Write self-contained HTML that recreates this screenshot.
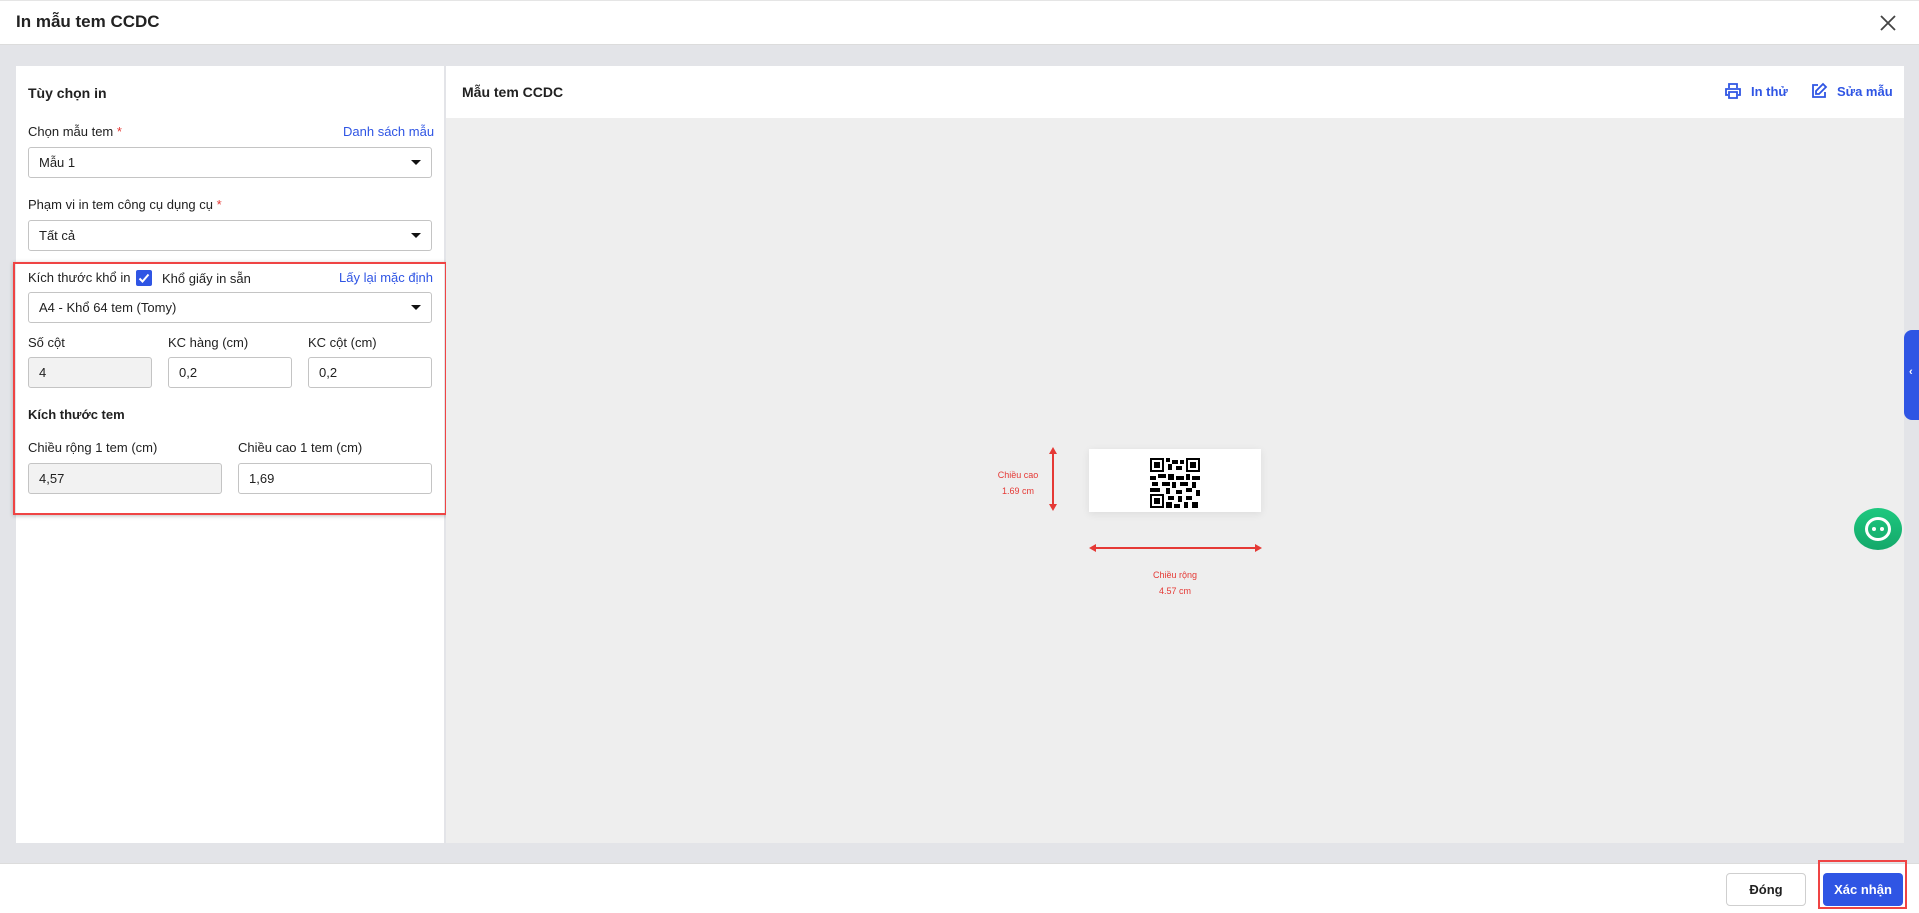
<!DOCTYPE html><html><head><meta charset="utf-8"><style>
*{box-sizing:border-box;margin:0;padding:0}
body{width:1919px;height:913px;position:relative;background:#e3e4e8;font-family:"Liberation Sans","Noto Sans CJK SC",sans-serif;color:#212121;overflow:hidden;font-size:13px}
.a{position:absolute}
.inp{position:absolute;height:31px;border:1px solid #c4c4c4;border-radius:3px;background:#fff;padding:0 10px;line-height:29px;font-size:13px}
.dis{background:#f2f2f2}
.car{position:absolute;right:10px;top:12px;border-left:5px solid transparent;border-right:5px solid transparent;border-top:5px solid #111}
.lbl{position:absolute;font-size:13px}
.req{color:#e53935}
.link{color:#2f55e4;position:absolute;font-size:13px}
</style></head><body>
<div class="a" style="left:0;top:0;width:1919px;height:45px;background:#fff;border-top:1px solid #e5e5e5;border-bottom:1px solid #dcdcdc"></div>
<div class="a" style="left:16px;top:12px;font-size:17px;font-weight:bold;color:#222">In mẫu tem CCDC</div>
<svg class="a" style="left:1880px;top:15px" width="16" height="16" viewBox="0 0 16 16"><path d="M1 1L15 15M15 1L1 15" stroke="#444" stroke-width="1.8"/></svg>

<div class="a" style="left:16px;top:66px;width:428px;height:777px;background:#fff"></div>
<div class="a" style="left:28px;top:85px;font-size:14px;font-weight:bold">Tùy chọn in</div>
<div class="lbl" style="left:28px;top:124px">Chọn mẫu tem <span class="req">*</span></div>
<div class="link" style="left:343px;top:124px">Danh sách mẫu</div>
<div class="inp" style="left:28px;top:147px;width:404px">Mẫu 1<span class="car"></span></div>
<div class="lbl" style="left:28px;top:197px">Phạm vi in tem công cụ dụng cụ <span class="req">*</span></div>
<div class="inp" style="left:28px;top:220px;width:404px">Tất cả<span class="car"></span></div>

<div class="a" style="left:13px;top:262px;width:434px;height:253px;border:2px solid #ef4444;box-shadow:0 1px 4px rgba(0,0,0,.25)"></div>
<div class="lbl" style="left:28px;top:270px">Kích thước khổ in</div>
<div class="a" style="left:136px;top:270px;width:16px;height:16px;background:#2f55e4;border-radius:2px"><svg width="16" height="16"><path d="M3.5 8.5L6.5 11.5L12.5 4.5" stroke="#fff" stroke-width="2" fill="none"/></svg></div>
<div class="lbl" style="left:162px;top:271px">Khổ giấy in sẵn</div>
<div class="link" style="left:339px;top:270px">Lấy lại mặc định</div>
<div class="inp" style="left:28px;top:292px;width:404px">A4 - Khổ 64 tem (Tomy)<span class="car"></span></div>
<div class="lbl" style="left:28px;top:335px">Số cột</div>
<div class="lbl" style="left:168px;top:335px">KC hàng (cm)</div>
<div class="lbl" style="left:308px;top:335px">KC cột (cm)</div>
<div class="inp dis" style="left:28px;top:357px;width:124px">4</div>
<div class="inp" style="left:168px;top:357px;width:124px">0,2</div>
<div class="inp" style="left:308px;top:357px;width:124px">0,2</div>
<div class="lbl" style="left:28px;top:407px;font-weight:bold">Kích thước tem</div>
<div class="lbl" style="left:28px;top:440px">Chiều rộng 1 tem (cm)</div>
<div class="lbl" style="left:238px;top:440px">Chiều cao 1 tem (cm)</div>
<div class="inp dis" style="left:28px;top:463px;width:194px">4,57</div>
<div class="inp" style="left:238px;top:463px;width:194px">1,69</div>

<div class="a" style="left:446px;top:66px;width:1458px;height:777px;background:#eeeeee"></div>
<div class="a" style="left:446px;top:66px;width:1458px;height:52px;background:#fff"></div>
<div class="a" style="left:462px;top:84px;font-size:14px;font-weight:bold">Mẫu tem CCDC</div>
<svg class="a" style="left:1724px;top:82px" width="18" height="18" viewBox="0 0 18 18" fill="none" stroke="#2f55e4" stroke-width="1.8"><path d="M5 6V2h8v4M4 13H2V7h14v6h-2M5 10h8v6H5z"/></svg>
<div class="link" style="left:1751px;top:84px;font-weight:bold">In thử</div>
<svg class="a" style="left:1810px;top:82px" width="18" height="18" viewBox="0 0 18 18" fill="none" stroke="#2f55e4" stroke-width="1.8"><path d="M8 3H3v12h12v-5M13 2l3 3-7 7H6V9z"/></svg>
<div class="link" style="left:1837px;top:84px;font-weight:bold">Sửa mẫu</div>

<div class="a" style="left:1089px;top:449px;width:172px;height:63px;background:#fff;box-shadow:0 2px 8px rgba(0,0,0,.08)"></div>
<svg class="a" style="left:1150px;top:458px" width="50" height="50" viewBox="0 0 25 25"><g fill="#000"><path d="M0 0h7v7H0zM18 0h7v7h-7zM0 18h7v7H0z"/></g><g fill="#fff"><path d="M1 1h5v5H1zM19 1h5v5h-5zM1 19h5v5H1z"/></g><g fill="#000"><path d="M2 2h3v3H2zM20 2h3v3h-3zM2 20h3v3H2zM8 0h2v2H8zM11 1h3v2h-3zM9 3h2v3H9zM13 4h3v2h-3zM15 1h2v2h-2zM0 9h3v2H0zM4 8h4v2H4zM9 8h3v3H9zM13 9h4v2h-4zM18 8h2v3h-2zM21 9h4v2h-4zM1 12h3v2H1zM6 12h4v2H6zM11 12h2v3h-2zM15 12h4v2h-4zM21 12h2v3h-2zM0 15h5v2H0zM8 15h2v3H8zM13 16h3v2h-3zM18 15h3v2h-3zM23 16h2v3h-2zM9 19h3v2H9zM14 19h2v3h-2zM18 19h3v2h-3zM8 22h3v3H8zM12 23h3v2h-3zM17 22h2v3h-2zM21 22h3v3h-3z"/></g></svg>
<svg class="a" style="left:1045px;top:446px" width="16" height="66"><path d="M8 3V63" stroke="#e53935" stroke-width="2"/><path d="M4 8L8 1L12 8zM4 58L8 65L12 58z" fill="#e53935"/></svg>
<div class="a" style="left:990px;top:467px;width:56px;text-align:center;color:#e53935;font-size:9px;line-height:16px">Chiều cao<br>1.69 cm</div>
<svg class="a" style="left:1088px;top:540px" width="175" height="16"><path d="M3 8H172" stroke="#e53935" stroke-width="2"/><path d="M8 4L1 8L8 12zM167 4L174 8L167 12z" fill="#e53935"/></svg>
<div class="a" style="left:1135px;top:567px;width:80px;text-align:center;color:#e53935;font-size:9px;line-height:16px">Chiều rộng<br>4.57 cm</div>

<div class="a" style="left:1904px;top:330px;width:15px;height:90px;background:#2f55e4;border-radius:8px 0 0 8px"></div>
<div class="a" style="left:1909px;top:366px;color:#fff;font-size:11px;font-weight:bold">‹</div>
<div class="a" style="left:1854px;top:508px;width:48px;height:42px;border-radius:50%;background:linear-gradient(#1ec87f,#14a86a)"></div>
<div class="a" style="left:1865px;top:517px;width:26px;height:24px;border-radius:50%;border:3px solid #fff"></div>
<div class="a" style="left:1872px;top:527px;width:4px;height:4px;border-radius:50%;background:#fff"></div>
<div class="a" style="left:1880px;top:527px;width:4px;height:4px;border-radius:50%;background:#fff"></div>

<div class="a" style="left:0;top:863px;width:1919px;height:50px;background:#fff;border-top:1px solid #dcdcdc"></div>
<div class="a" style="left:1726px;top:873px;width:80px;height:33px;border:1px solid #cfcfcf;border-radius:4px;text-align:center;line-height:31px;font-weight:bold;font-size:13px">Đóng</div>
<div class="a" style="left:1818px;top:860px;width:89px;height:49px;border:2px solid #ef4444"></div>
<div class="a" style="left:1823px;top:873px;width:80px;height:33px;background:#2f55e4;border-radius:4px;text-align:center;line-height:33px;font-weight:bold;color:#fff;font-size:13px">Xác nhận</div>
</body></html>
